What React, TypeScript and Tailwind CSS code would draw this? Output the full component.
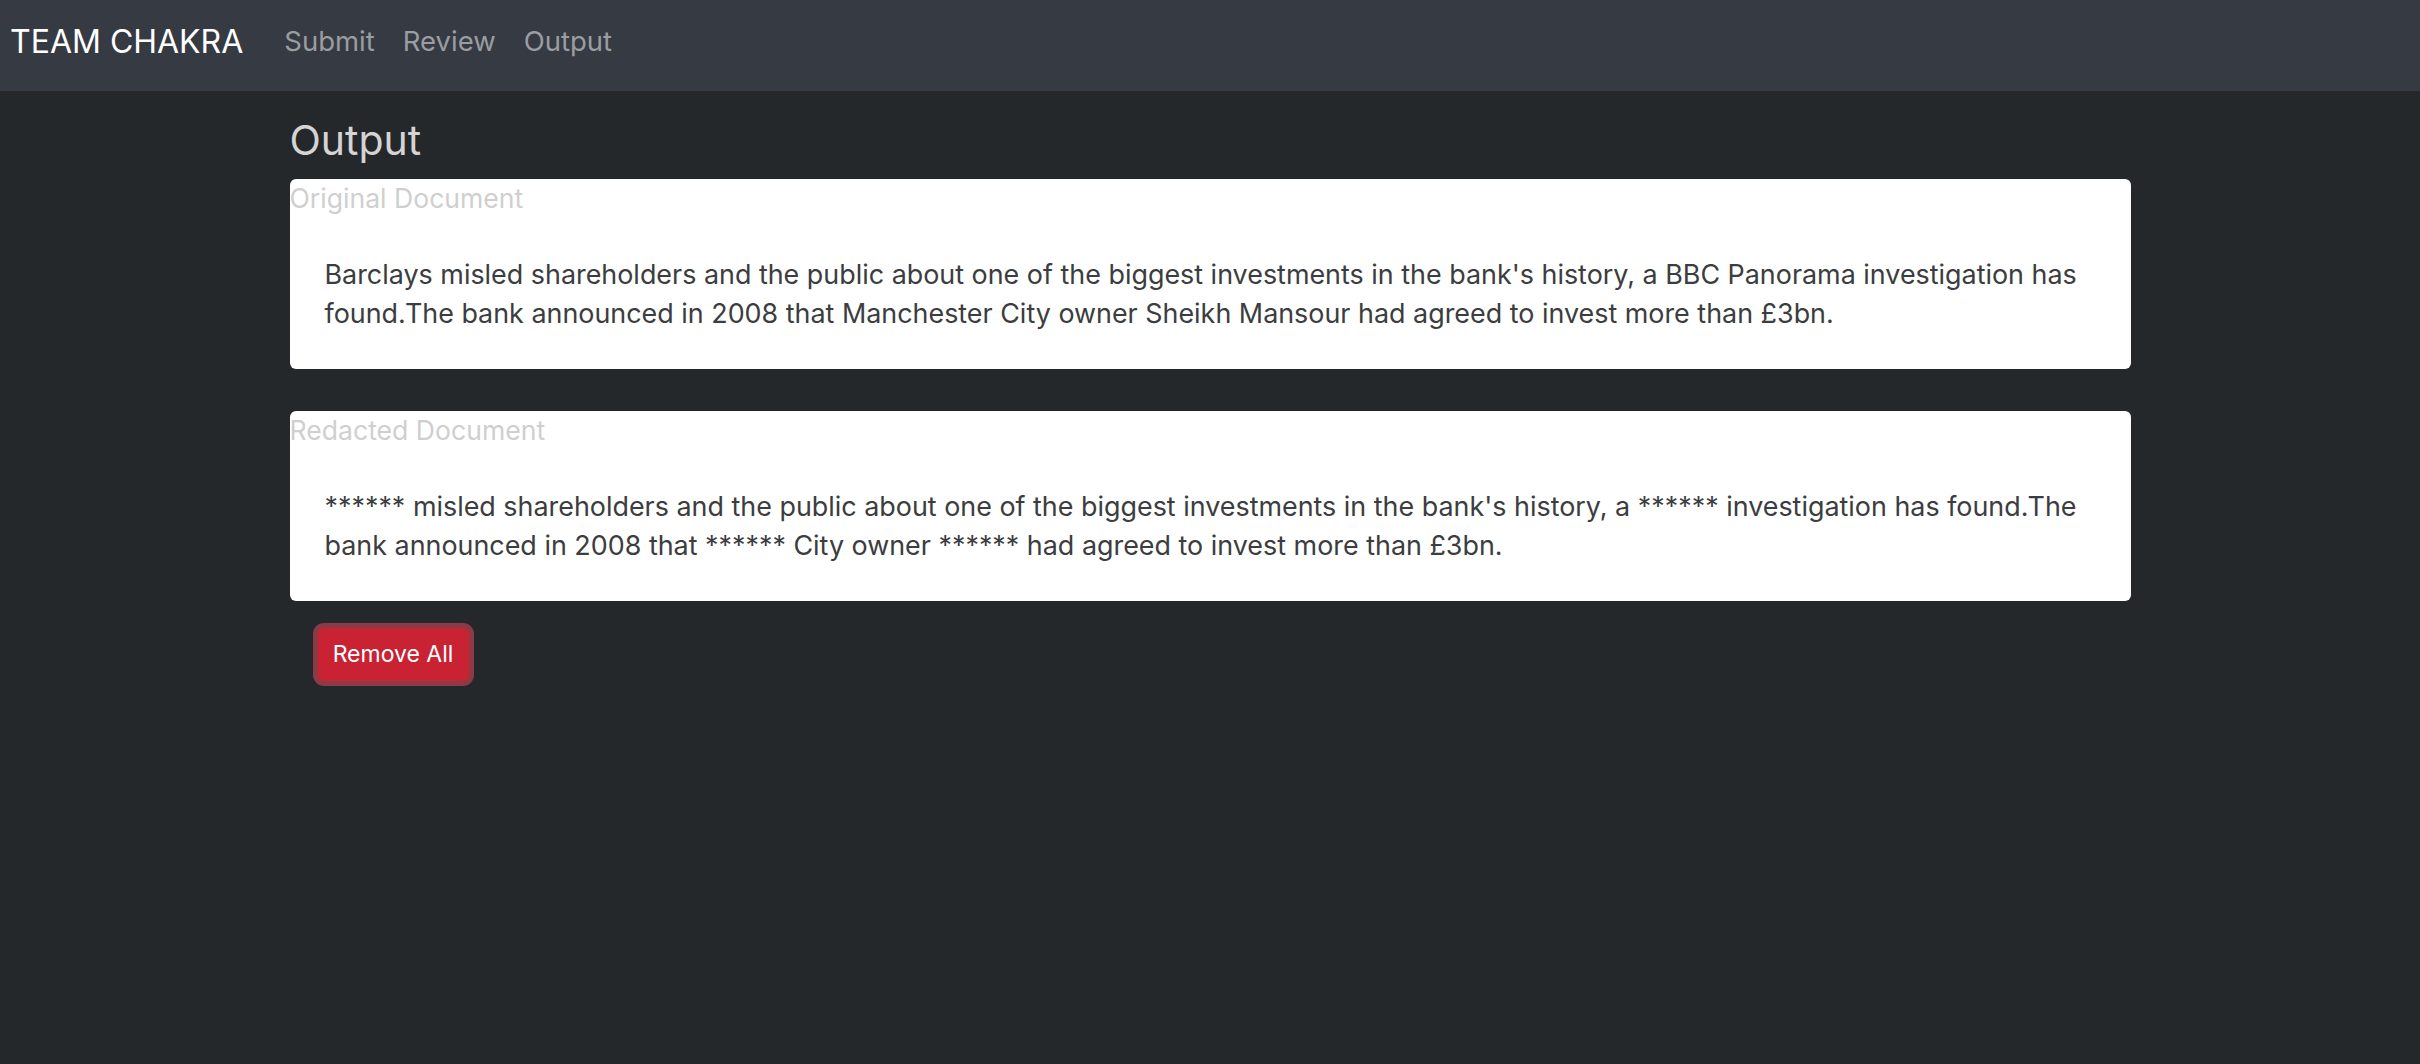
import React from 'react';

const original =
  "Barclays misled shareholders and the public about one of the biggest investments in the bank's history, a BBC Panorama investigation has found.The bank announced in 2008 that Manchester City owner Sheikh Mansour had agreed to invest more than £3bn.";

const redacted =
  "****** misled shareholders and the public about one of the biggest investments in the bank's history, a ****** investigation has found.The bank announced in 2008 that ****** City owner ****** had agreed to invest more than £3bn.";

interface DocCardProps {
  title: string;
  text: string;
}

const DocCard: React.FC<DocCardProps> = ({ title, text }) => {
  return (
    <div className="bg-white rounded-[6px]">
      <div className="text-[26.6px] leading-[39px] text-[#cfcfcf]">{title}</div>
      <div className="px-[35px] pt-[37px] pb-[36px] text-[26.9px] leading-[39px] text-[#3b3d40]">{text}</div>
    </div>
  );
};

export default function App() {
  return (
    <div className="min-h-screen bg-[#25282b] font-['Inter',sans-serif]">
      <nav className="h-[91px] bg-[#363a42] flex items-center pl-[10px] pb-[7px]">
        <span className="text-[32px] text-white">TEAM CHAKRA</span>
        <div className="flex items-center gap-[28px] ml-[41px] text-[27.5px] text-[#9a9da2]">
          <a href="#">Submit</a>
          <a href="#">Review</a>
          <a href="#">Output</a>
        </div>
      </nav>

      <main className="w-[1841px] mx-auto pt-[24px]">
        <h4 className="text-[41px] leading-[50px] text-[#d4d4d4] mb-[14px]">Output</h4>
        <div className="flex flex-col gap-[42px]">
          <DocCard title="Original Document" text={original} />
          <DocCard title="Redacted Document" text={redacted} />
        </div>
        <div className="mt-[27px] ml-[28px]">
          <button className="w-[151px] h-[53px] rounded-[6px] bg-[#c92232] text-white text-[23px] ring-[5px] ring-[#8c3a46]">
            Remove All
          </button>
        </div>
      </main>
    </div>
  );
}
